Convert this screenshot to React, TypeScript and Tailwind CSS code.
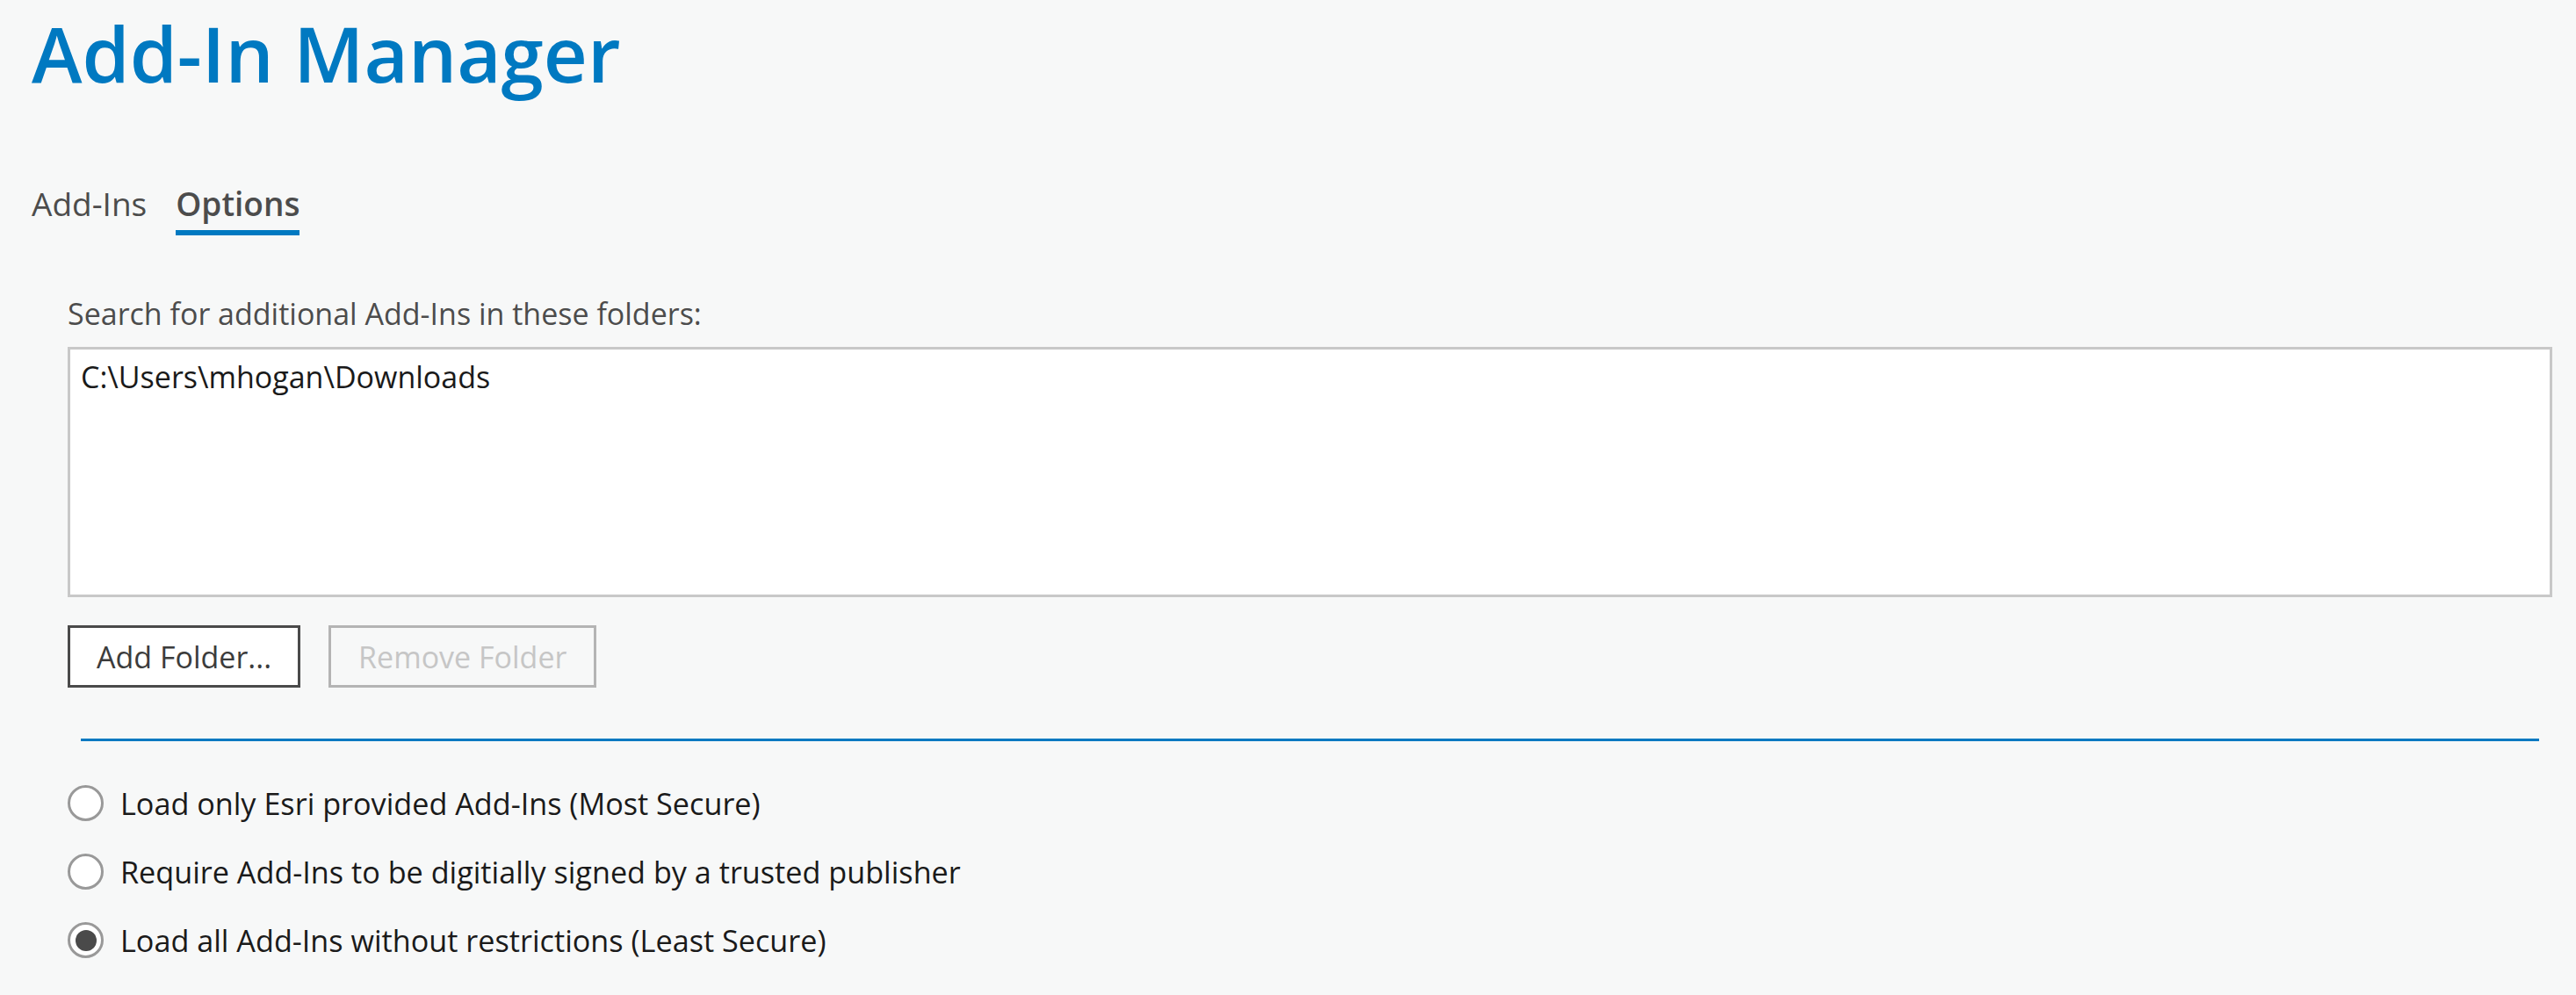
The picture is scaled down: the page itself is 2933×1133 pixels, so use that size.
import { useState } from "react";

const options = [
  "Load only Esri provided Add-Ins (Most Secure)",
  "Require Add-Ins to be digitially signed by a trusted publisher",
  "Load all Add-Ins without restrictions (Least Secure)",
];

export default function App() {
  const [tab, setTab] = useState("options");
  const [security, setSecurity] = useState(2);

  return (
    <div className="min-h-screen bg-[#f7f8f8] pl-[36px] pr-[27px] font-['Open_Sans',sans-serif]">
      <h1 className="pt-[16px] text-[87px] leading-[88px] font-semibold text-[#0079c1]">
        Add-In Manager
      </h1>

      {/* Tabs */}
      <div className="mt-[109px] flex gap-[33px] text-[37px] leading-[37px] text-[#4c4c4c]">
        <button
          onClick={() => setTab("addins")}
          className={
            tab === "addins"
              ? "pb-[12px] border-b-[6px] border-[#0079c1] font-semibold"
              : "pb-[12px] border-b-[6px] border-transparent"
          }
        >
          Add-Ins
        </button>
        <button
          onClick={() => setTab("options")}
          className={
            tab === "options"
              ? "pb-[12px] border-b-[6px] border-[#0079c1] font-semibold"
              : "pb-[12px] border-b-[6px] border-transparent"
          }
        >
          Options
        </button>
      </div>

      <div className="mt-[72px] pl-[41px] text-[34px] leading-[34px]">
        <p className="text-[#4c4c4c]">Search for additional Add-Ins in these folders:</p>

        {/* Folder list */}
        <div className="mt-[21px] h-[285px] border-[3px] border-[#c8c8c8] bg-white px-[12px] pt-[14px] text-[#1a1a1a]">
          <div>C:\Users\mhogan\Downloads</div>
        </div>

        <div className="mt-[32px] flex gap-[32px]">
          <button className="h-[71px] border-[3px] border-[#4a4a4a] bg-white px-[30px] text-[#3c3c3c]">
            Add Folder...
          </button>
          <button
            disabled
            className="h-[71px] border-[3px] border-[#b4b4b4] px-[31px] text-[#c6c6c6]"
          >
            Remove Folder
          </button>
        </div>

        <div className="mx-[15px] mt-[58px] h-[3px] bg-[#0079c1]" />

        {/* Security options */}
        <div className="mt-[50px] flex flex-col gap-[37px] pb-[40px] text-[34.2px]">
          {options.map((label, i) => (
            <label
              key={label}
              onClick={() => setSecurity(i)}
              className="flex h-[41px] items-center gap-[19px] text-[#1a1a1a] cursor-pointer"
            >
              <span className="flex h-[41px] w-[41px] items-center justify-center rounded-full border-[3px] border-[#999999] bg-white">
                {security === i && (
                  <span className="h-[24px] w-[24px] rounded-full bg-[#4a4a4a]" />
                )}
              </span>
              <span>{label}</span>
            </label>
          ))}
        </div>
      </div>
    </div>
  );
}
